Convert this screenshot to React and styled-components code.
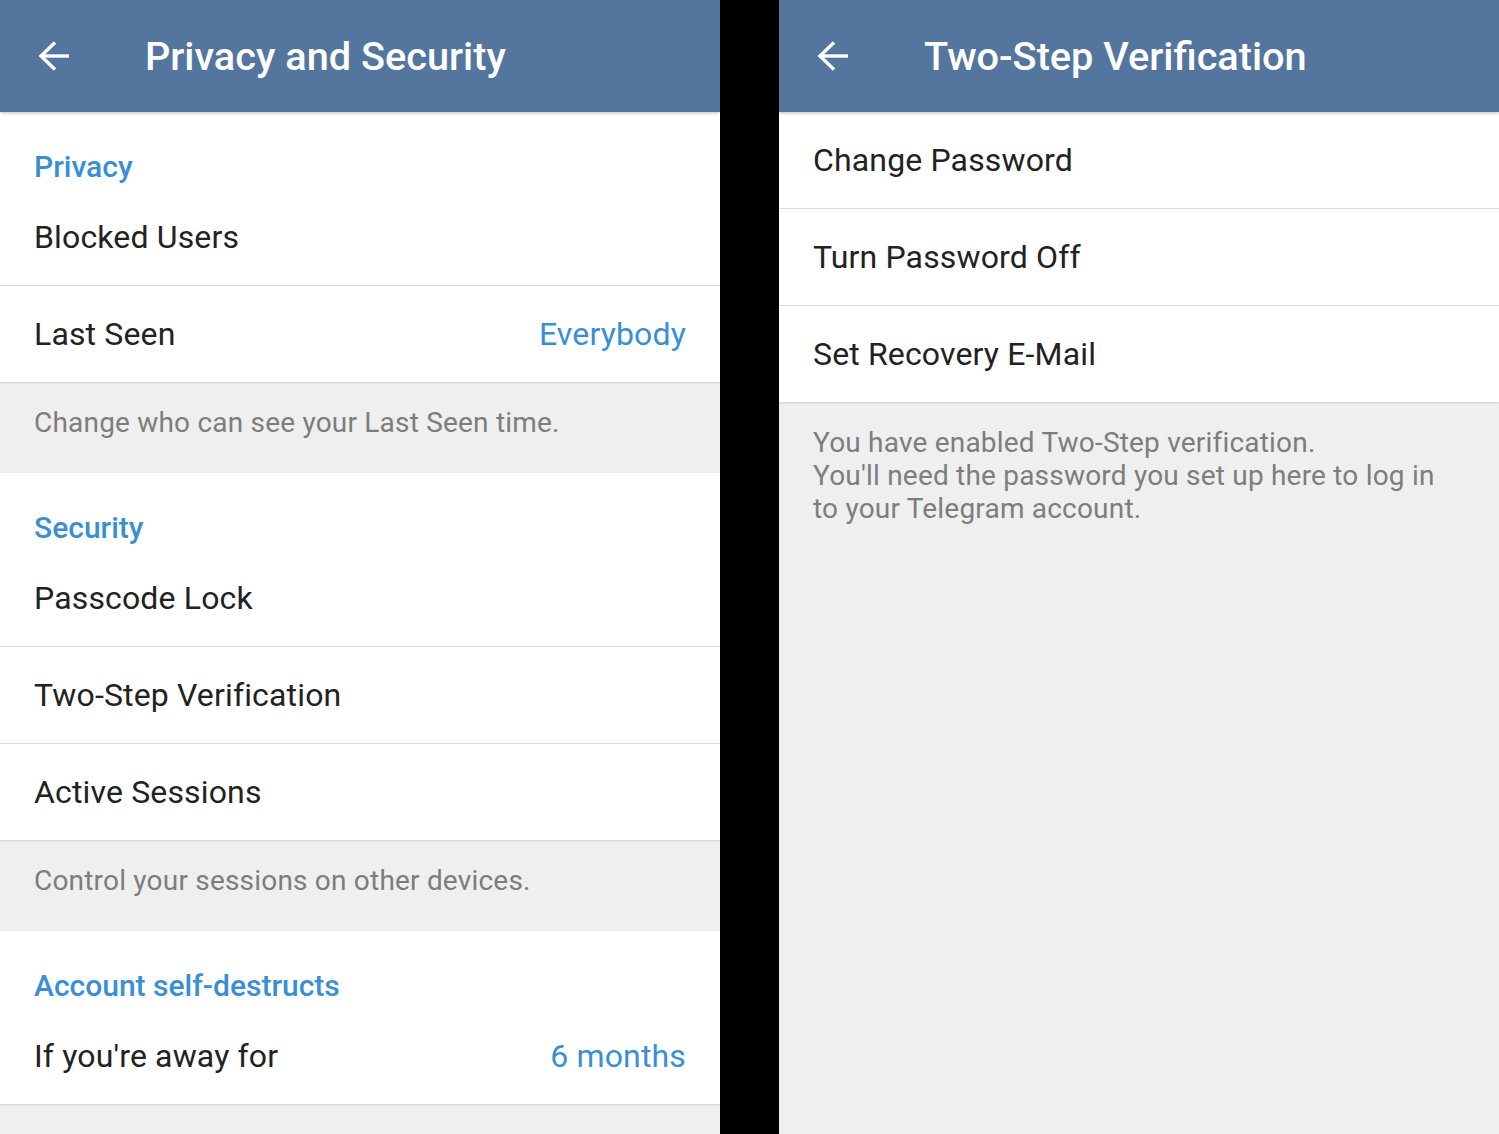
import React from 'react';
import styled, { createGlobalStyle } from 'styled-components';

const GlobalStyle = createGlobalStyle`
  html, body {
    margin: 0;
    padding: 0;
    background: #000;
  }
  body {
    font-family: Roboto, "Noto Sans", "Liberation Sans", sans-serif;
    -webkit-font-smoothing: antialiased;
  }
`;

const Screen = styled.div`
  display: flex;
  justify-content: space-between;
  width: 1499px;
  height: 1134px;
  overflow: hidden;
  background: #000;
`;

const Panel = styled.div`
  display: flex;
  flex-direction: column;
  width: 720px;
  height: 100%;
  background: #efefef;
`;

const Header = styled.div`
  display: flex;
  align-items: center;
  height: 112px;
  flex-shrink: 0;
  background: #54769e;
  box-shadow: 0 1px 3px rgba(0, 0, 0, 0.25);
  position: relative;
  z-index: 1;
`;

const Back = styled.div`
  display: flex;
  align-items: center;
  justify-content: center;
  width: 32px;
  height: 32px;
  margin-left: 38px;
  margin-right: 75px;
`;

const Title = styled.h1`
  margin: 0;
  color: #fff;
  font-size: 39.7px;
  font-weight: 500;
`;

const Section = styled.div`
  background: #fff;
  box-shadow: 0 1px 2px rgba(0, 0, 0, 0.14);
`;

const SectionTitle = styled.div`
  height: 77px;
  box-sizing: border-box;
  padding: 38px 34px 0;
  line-height: 33px;
  font-size: 30px;
  font-weight: 500;
  color: #3a8fd4;
`;

const Row = styled.div`
  display: flex;
  align-items: center;
  justify-content: space-between;
  height: ${p => (p.$last ? '96px' : '97px')};
  box-sizing: border-box;
  padding: 0 34px;
  border-bottom: ${p => (p.$last ? 'none' : '1px solid #dcdcdc')};
  font-size: 32px;
  letter-spacing: 0.15px;
  color: #222;
`;

const Value = styled.span`
  color: #3a8fd4;
`;

const Info = styled.div`
  padding: 24px 40px 34px 34px;
  font-size: 28px;
  line-height: 33px;
  letter-spacing: 0.2px;
  color: #7d7d7d;
`;

const Gap = styled.div`
  flex: 1;
`;

const BackArrow = () => (
  <Back>
    <svg width="32" height="32" viewBox="0 0 32 32" fill="none">
      <path d="M31 16H3" stroke="#fff" strokeWidth="3.4" />
      <path d="M17 2.5L3 16l14 13.5" stroke="#fff" strokeWidth="3.4" />
    </svg>
  </Back>
);

const Bar = ({ title }) => (
  <Header>
    <BackArrow />
    <Title>{title}</Title>
  </Header>
);

const rows = (items) =>
  items.map((item, i) => (
    <Row key={item.label} $last={i === items.length - 1}>
      <span>{item.label}</span>
      {item.value && <Value>{item.value}</Value>}
    </Row>
  ));

export default function App() {
  return (
    <>
      <GlobalStyle />
      <Screen>
        <Panel>
          <Bar title="Privacy and Security" />
          <Section>
            <SectionTitle>Privacy</SectionTitle>
            {rows([
              { label: 'Blocked Users' },
              { label: 'Last Seen', value: 'Everybody' },
            ])}
          </Section>
          <Info>Change who can see your Last Seen time.</Info>
          <Section>
            <SectionTitle>Security</SectionTitle>
            {rows([
              { label: 'Passcode Lock' },
              { label: 'Two-Step Verification' },
              { label: 'Active Sessions' },
            ])}
          </Section>
          <Info>Control your sessions on other devices.</Info>
          <Section>
            <SectionTitle>Account self-destructs</SectionTitle>
            {rows([{ label: "If you're away for", value: '6 months' }])}
          </Section>
          <Gap />
        </Panel>
        <Panel>
          <Bar title="Two-Step Verification" />
          <Section>
            {rows([
              { label: 'Change Password' },
              { label: 'Turn Password Off' },
              { label: 'Set Recovery E-Mail' },
            ])}
          </Section>
          <Info>
            You have enabled Two-Step verification.
            <br />
            You'll need the password you set up here to log in to your Telegram account.
          </Info>
        </Panel>
      </Screen>
    </>
  );
}
